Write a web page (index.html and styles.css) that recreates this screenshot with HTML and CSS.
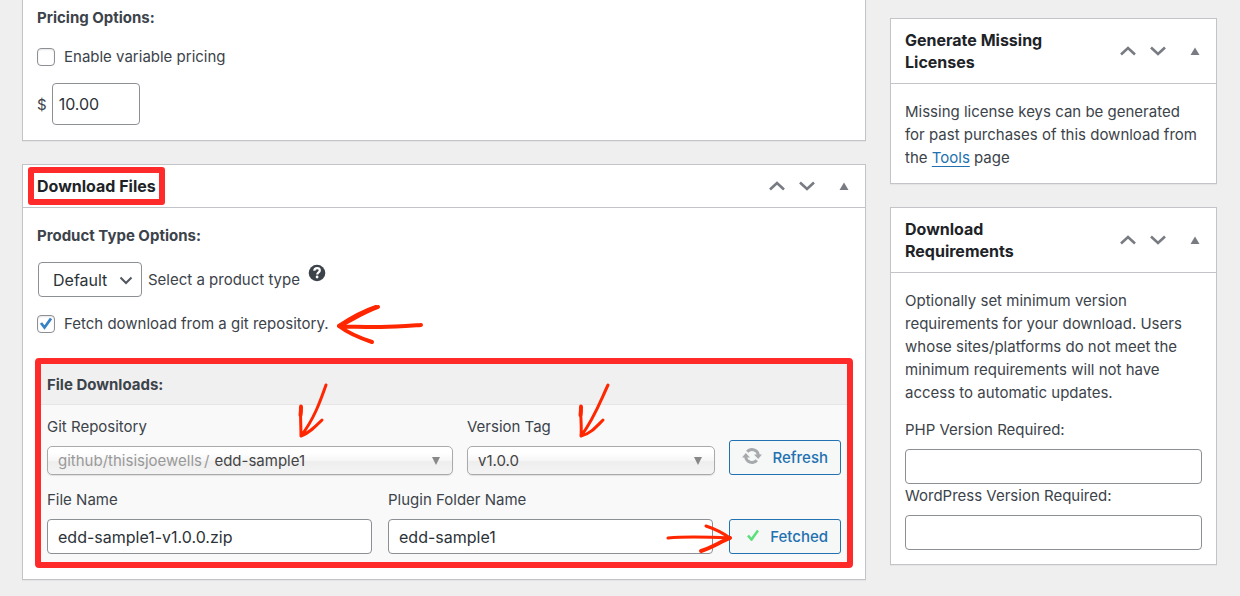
FILE: index.html
```html
<!DOCTYPE html>
<html lang="en">
<head>
    <meta charset="utf-8">
    <title>Edit Download</title>
    <link rel="stylesheet" href="styles.css">
</head>
<body>
    <svg class="sprite" aria-hidden="true">
        <symbol id="icon-up" viewBox="0 0 16 10"><path d="M1 8.500 8 2l7 6.500" fill="none" stroke="currentColor" stroke-width="2.600"/></symbol>
        <symbol id="icon-down" viewBox="0 0 16 10"><path d="M1 1.500 8 8l7-6.500" fill="none" stroke="currentColor" stroke-width="2.600"/></symbol>
        <symbol id="icon-toggle" viewBox="0 0 10 8"><path d="M5 0.500 9.500 8h-9z" fill="currentColor"/></symbol>
    </svg>

    <div class="editor">
        <main class="column">
            <section class="postbox postbox-cut">
                <div class="pricing">
                    <h3 class="field-title">Pricing Options:</h3>
                    <div class="check-row">
                        <input type="checkbox" id="variablePricing">
                        <label for="variablePricing">Enable variable pricing</label>
                    </div>
                    <div class="price-row">
                        <label for="price">$</label>
                        <input type="text" class="text-input price-input" id="price" value="10.00">
                    </div>
                </div>
            </section>

            <section class="postbox">
                <header class="postbox-header">
                    <h2 class="marked">Download Files</h2>
                    <div class="handle-actions">
                        <button type="button" aria-label="Move up"><svg class="chevron"><use href="#icon-up"/></svg></button>
                        <button type="button" aria-label="Move down"><svg class="chevron"><use href="#icon-down"/></svg></button>
                        <button type="button" aria-label="Toggle panel"><svg class="toggle"><use href="#icon-toggle"/></svg></button>
                    </div>
                </header>
                <div class="files">
                    <h3 class="field-title">Product Type Options:</h3>
                    <div class="type-row">
                        <div class="type-select">
                            <select id="productType">
                                <option>Default</option>
                            </select>
                            <svg class="select-arrow" viewBox="0 0 14 9"><path d="M1.500 1.500 7 7l5.500-5.500" fill="none" stroke="currentColor" stroke-width="2"/></svg>
                        </div>
                        <label for="productType">Select a product type</label>
                        <svg class="help" viewBox="0 0 18 18" role="img" aria-label="Help">
                            <circle cx="9" cy="9" r="8.300" fill="#3c434a"/>
                            <path d="M6.300 6.800C6.400 5.100 7.500 4.200 9.100 4.200c1.600 0 2.700.900 2.700 2.300 0 1.800-2.600 1.900-2.600 3.900" fill="none" stroke="#fff" stroke-width="2.200"/>
                            <circle cx="9.100" cy="13" r="1.400" fill="#fff"/>
                        </svg>
                    </div>
                    <div class="check-row">
                        <input type="checkbox" id="fetchGit" checked>
                        <label for="fetchGit">Fetch download from a git repository.</label>
                        <svg class="arrow arrow-left" viewBox="0 0 92 42">
                            <path d="M44 4C28 10 16 18 5 23c12 1 28 1 42 1 14 0 26-1 40-2M5 23c9 7 21 12 33 16"/>
                            <path class="thick" d="m5 23c12-8 25-15 37-19"/>
                        </svg>
                    </div>

                    <div class="downloads">
                        <h3 class="downloads-title">File Downloads:</h3>
                        <div class="row row-repo">
                            <div class="field field-repo">
                                <label for="repo">Git Repository</label>
                                <div class="chosen">
                                    <span class="owner">github/thisisjoewells<span class="slash">/</span></span>
                                    <select id="repo">
                                        <option>edd-sample1</option>
                                    </select>
                                    <svg class="caret" viewBox="0 0 8 8"><path d="M0 0h8L4 8z"/></svg>
                                </div>
                                <svg class="arrow arrow-down arrow-repo" viewBox="0 0 32 58">
                                    <path d="M28 3C22 20 16 37 3 54 3 43 2 33 3 24M3 54c8-3 14-9 21-16"/>
                                    <path class="thick" d="M3 25c0 3 0 5-.500 8"/>
                                </svg>
                            </div>
                            <div class="field field-version">
                                <label for="version">Version Tag</label>
                                <div class="chosen">
                                    <select id="version">
                                        <option>v1.0.0</option>
                                    </select>
                                    <svg class="caret" viewBox="0 0 8 8"><path d="M0 0h8L4 8z"/></svg>
                                </div>
                                <svg class="arrow arrow-down arrow-version" viewBox="0 0 32 58">
                                    <path d="M30 3C22 20 16 37 3 54 4 43 2 33 3 24M3 54c9-2 15-9 22-16"/>
                                    <path class="thick" d="M3 25c0 3 0 5-.500 8"/>
                                </svg>
                            </div>
                            <button type="button" class="btn">
                                <svg class="refresh" viewBox="0 0 20 16">
                                    <path d="M5.200 3.800A6.300 6.300 0 0 1 16.300 7.500M14.800 12.200A6.300 6.300 0 0 1 3.700 8.500" fill="none" stroke="#a7aaad" stroke-width="3"/>
                                    <path d="M0 9.500 3.800 5 8 9.500zM12 6.500h8L16.200 11z" fill="#a7aaad"/>
                                </svg>
                                Refresh
                            </button>
                        </div>
                        <div class="row row-names">
                            <div class="field">
                                <label for="fileName">File Name</label>
                                <input type="text" class="text-input" id="fileName" value="edd-sample1-v1.0.0.zip">
                            </div>
                            <div class="field">
                                <label for="folderName">Plugin Folder Name</label>
                                <input type="text" class="text-input" id="folderName" value="edd-sample1">
                            </div>
                            <button type="button" class="btn">
                                <svg class="tick" viewBox="0 0 12 12"><path d="m1 6.500 3.500 4L11 1.500" fill="none" stroke="#5be07a" stroke-width="2.600"/></svg>
                                Fetched
                            </button>
                            <svg class="arrow arrow-right" viewBox="0 0 70 34">
                                <path d="M3 18c20-2 42-1 62 0C58 13 50 9 41 6"/>
                                <path class="thick" d="M65 18c-10 4-19 10-29 13"/>
                            </svg>
                        </div>
                    </div>
                </div>
            </section>
        </main>

        <aside class="column">
            <section class="postbox">
                <header class="postbox-header">
                    <h2>Generate Missing Licenses</h2>
                    <div class="handle-actions">
                        <button type="button" aria-label="Move up"><svg class="chevron"><use href="#icon-up"/></svg></button>
                        <button type="button" aria-label="Move down"><svg class="chevron"><use href="#icon-down"/></svg></button>
                        <button type="button" aria-label="Toggle panel"><svg class="toggle"><use href="#icon-toggle"/></svg></button>
                    </div>
                </header>
                <div class="side-body">
                    <p>Missing license keys can be generated for past purchases of this download from the <a href="#">Tools</a> page</p>
                </div>
            </section>

            <section class="postbox">
                <header class="postbox-header">
                    <h2>Download Requirements</h2>
                    <div class="handle-actions">
                        <button type="button" aria-label="Move up"><svg class="chevron"><use href="#icon-up"/></svg></button>
                        <button type="button" aria-label="Move down"><svg class="chevron"><use href="#icon-down"/></svg></button>
                        <button type="button" aria-label="Toggle panel"><svg class="toggle"><use href="#icon-toggle"/></svg></button>
                    </div>
                </header>
                <div class="side-body">
                    <p>Optionally set minimum version requirements for your download. Users whose sites/platforms do not meet the minimum requirements will not have access to automatic updates.</p>
                    <div class="requirements">
                        <label for="phpVersion">PHP Version Required:</label>
                        <input type="text" class="text-input" id="phpVersion">
                        <label for="wpVersion">WordPress Version Required:</label>
                        <input type="text" class="text-input" id="wpVersion">
                    </div>
                </div>
            </section>
        </aside>
    </div>
</body>
</html>
```

FILE: styles.css
```css
* {
    box-sizing: border-box;
}

body {
    margin: 0;
    background-color: #efefef;
    color: #3c434a;
    font-family: Inter, "Liberation Sans", sans-serif;
    font-size: 15px;
    line-height: 23px;
}

h2,
h3,
p {
    margin: 0;
}

input,
select,
button {
    font-family: inherit;
    color: #2c3338;
}

a {
    color: #2271b1;
    text-underline-offset: 3px;
}

.sprite {
    display: none;
}

.editor {
    display: grid;
    grid-template-columns: minmax(0, 1fr) 327px;
    gap: 24px;
    padding: 0 23px 16px 22px;
}

.column {
    display: flex;
    flex-direction: column;
    gap: 23px;
}

aside.column {
    padding-top: 18px;
}

.postbox {
    background-color: #fff;
    border: 1px solid #c3c4c7;
    box-shadow: 0 1px 1px rgba(0,0,0,0.04);
}

.postbox-cut {
    border-top: none;
}

.postbox-header {
    display: flex;
    justify-content: space-between;
    align-items: center;
    padding: 10px 16px 10px 14px;
    border-bottom: 1px solid #c3c4c7;
}

.postbox-header h2 {
    position: relative;
    color: #1d2327;
    font-size: 16px;
    font-weight: 700;
    line-height: 22px;
}

aside .postbox-header h2 {
    max-width: 180px;
}

.marked::after {
    content: "";
    position: absolute;
    inset: -8px -9px;
    border: 6px solid #ff2a2a;
    border-radius: 3px;
}

.handle-actions {
    display: flex;
    align-items: center;
    gap: 14px;
}

.handle-actions button {
    display: flex;
    padding: 0;
    border: none;
    background: none;
    color: #787c82;
    cursor: pointer;
}

.handle-actions button:last-child {
    margin-left: 10px;
}

.chevron {
    width: 16px;
    height: 10px;
}

.toggle {
    width: 10px;
    height: 8px;
}

.field-title {
    font-size: 15px;
    font-weight: 700;
}

.pricing {
    padding: 6px 14px 15px;
}

.check-row {
    position: relative;
    display: flex;
    align-items: center;
    gap: 9px;
}

.check-row input {
    appearance: none;
    width: 18px;
    height: 18px;
    margin: 0;
    border: 1px solid #8c8f94;
    border-radius: 4px;
    background-color: #fff;
    box-shadow: inset 0 1px 2px rgba(0,0,0,0.1);
}

.check-row input:checked {
    background-image: url("data:image/svg+xml,%3Csvg xmlns='http://www.w3.org/2000/svg' viewBox='0 0 16 16'%3E%3Cpath d='M3 7l3.500 4.500L13 2.500' fill='none' stroke='%233582c4' stroke-width='2.800'/%3E%3C/svg%3E");
}

.pricing .check-row {
    margin: 16px 0 15px;
}

.price-row {
    display: flex;
    align-items: center;
    gap: 5px;
}

.text-input {
    width: 100%;
    height: 35px;
    padding: 0 10px;
    border: 1px solid #8c8f94;
    border-radius: 4px;
    background-color: #fff;
    font-size: 16px;
}

.price-input {
    width: 88px;
    height: 42px;
    padding: 0 6px;
}

.files {
    padding: 16px 12px 11px;
}

.files > .field-title,
.files > .check-row {
    padding-left: 2px;
}

.type-row {
    display: flex;
    align-items: center;
    gap: 6px;
    padding: 15px 3px;
}

.type-select {
    position: relative;
}

.type-select select {
    display: block;
    appearance: none;
    width: 104px;
    height: 35px;
    padding: 0 14px;
    border: 1px solid #8c8f94;
    border-radius: 4px;
    background-color: #fff;
    font-size: 16px;
}

.select-arrow {
    position: absolute;
    top: 14px;
    right: 9px;
    width: 14px;
    height: 9px;
    color: #50575e;
    pointer-events: none;
}

.help {
    width: 18px;
    height: 18px;
    margin: 2px;
    align-self: flex-start;
}

.downloads {
    margin-top: 23px;
    border: 6px solid #ff2a2a;
    border-radius: 4px;
    background-color: #f9f9f9;
}

.downloads-title {
    padding: 9px 6px 8px;
    border-bottom: 1px solid #e5e5e5;
    background-color: #f0f0f0;
    font-size: 15px;
    font-weight: 700;
}

.row {
    position: relative;
    display: flex;
    align-items: flex-end;
    padding: 0 6px;
}

.row-repo {
    gap: 14px;
    padding-top: 10px;
}

.row-names {
    gap: 16px;
    padding-top: 13px;
    padding-bottom: 8px;
}

.field {
    position: relative;
    display: flex;
    flex: 1 1 0;
    flex-direction: column;
    gap: 8px;
    min-width: 0;
}

.field-repo {
    flex-grow: 406;
}

.field-version {
    flex-grow: 248;
}

.chosen {
    display: flex;
    align-items: center;
    height: 29px;
    padding: 0 12px 0 10px;
    border: 1px solid #aaa;
    border-radius: 5px;
    background: linear-gradient(#fff 20%, #f6f6f6 50%, #eee 52%, #f4f4f4 100%);
    box-shadow: 0 1px 1px rgba(0,0,0,0.1);
}

.chosen select {
    appearance: none;
    flex: 1;
    min-width: 0;
    padding: 0;
    border: none;
    background: none;
    color: #444;
    font-size: 15px;
}

.owner {
    margin-right: 5px;
    color: #999;
}

.slash {
    margin-left: 2px;
}

.caret {
    width: 8px;
    height: 8px;
    fill: #888;
}

.btn {
    display: flex;
    justify-content: space-between;
    align-items: center;
    width: 112px;
    height: 35px;
    padding: 0 12px;
    border: 1px solid #2271b1;
    border-radius: 3px;
    background-color: #f6f7f7;
    color: #2271b1;
    font-size: 15px;
    font-weight: 500;
    cursor: pointer;
}

.refresh {
    width: 20px;
    height: 16px;
}

.tick {
    width: 12px;
    height: 12px;
    margin-left: 5px;
}

.refresh,
.tick {
    margin-bottom: 3px;
}

/* hand drawn pointers */
.arrow {
    position: absolute;
    fill: none;
    stroke: #ff2600;
    stroke-width: 3;
    stroke-linecap: round;
    stroke-linejoin: round;
    pointer-events: none;
}

.arrow .thick {
    stroke-width: 4;
}

.arrow-left {
    top: -9px;
    left: 299px;
    width: 92px;
    height: 42px;
    stroke-width: 4;
}

.arrow-down {
    top: -33px;
    width: 32px;
    height: 58px;
}

.arrow-repo {
    left: 251px;
}

.arrow-version {
    left: 111px;
}

.arrow-right {
    right: 112px;
    bottom: 8px;
    width: 70px;
    height: 34px;
}

.side-body {
    padding: 16px 14px 14px;
}

.side-body p + .requirements {
    margin-top: 14px;
}

.requirements {
    display: grid;
}

.requirements .text-input {
    margin-top: 8px;
}
```
